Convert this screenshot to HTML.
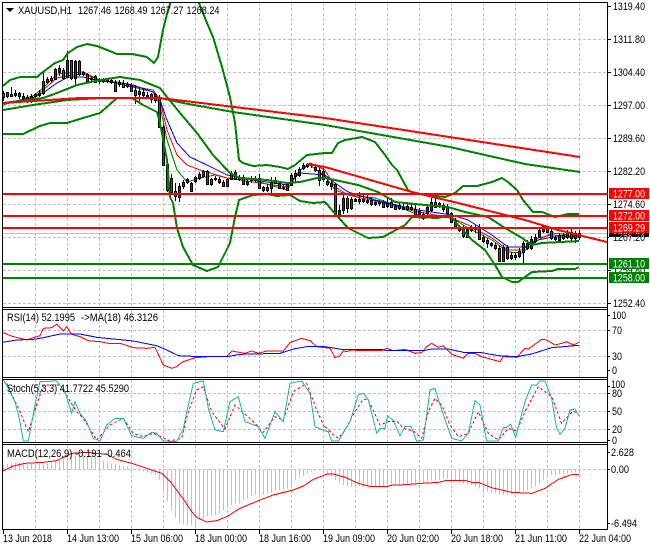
<!DOCTYPE html>
<html><head><meta charset="utf-8"><title>XAUUSD,H1</title>
<style>
html,body{margin:0;padding:0;background:#fff;width:650px;height:550px;overflow:hidden}
svg{display:block}
text{font-family:"Liberation Sans",sans-serif;font-size:11px;fill:#000}
.w{fill:#fff}
polyline,.c{fill:none;shape-rendering:crispEdges}
.g{stroke:#c0c0c0;stroke-width:1;stroke-dasharray:3 2;fill:none;shape-rendering:crispEdges}
</style></head><body>
<svg width="650" height="550" viewBox="0 0 650 550" xmlns="http://www.w3.org/2000/svg">
<rect width="650" height="550" fill="#fff"/>
<clipPath id="m"><rect x="3" y="3" width="604" height="304"/></clipPath>
<clipPath id="rs"><rect x="3" y="310" width="604" height="67"/></clipPath>
<clipPath id="st"><rect x="3" y="380" width="604" height="62"/></clipPath>
<clipPath id="ma"><rect x="3" y="445" width="604" height="84"/></clipPath>

<!-- grids -->
<path class="g" d="M35.5 3V307M67.5 3V307M99.5 3V307M131.5 3V307M163.5 3V307M195.5 3V307M227.5 3V307M259.5 3V307M291.5 3V307M323.5 3V307M355.5 3V307M387.5 3V307M419.5 3V307M451.5 3V307M483.5 3V307M515.5 3V307M547.5 3V307M579.5 3V307"/>
<path class="g" d="M3 39.5H607M3 72.5H607M3 105.5H607M3 138.5H607M3 171.5H607M3 204.5H607M3 237.5H607M3 270.5H607M3 303.5H607"/>
<path class="g" d="M35.5 310V377M67.5 310V377M99.5 310V377M131.5 310V377M163.5 310V377M195.5 310V377M227.5 310V377M259.5 310V377M291.5 310V377M323.5 310V377M355.5 310V377M387.5 310V377M419.5 310V377M451.5 310V377M483.5 310V377M515.5 310V377M547.5 310V377M579.5 310V377"/>
<path class="g" d="M3 330.5H607M3 356.5H607"/>
<path class="g" d="M35.5 380V442M67.5 380V442M99.5 380V442M131.5 380V442M163.5 380V442M195.5 380V442M227.5 380V442M259.5 380V442M291.5 380V442M323.5 380V442M355.5 380V442M387.5 380V442M419.5 380V442M451.5 380V442M483.5 380V442M515.5 380V442M547.5 380V442M579.5 380V442"/>
<path class="g" d="M3 393.5H607M3 411.5H607M3 429.5H607"/>
<path class="g" d="M35.5 445V529M67.5 445V529M99.5 445V529M131.5 445V529M163.5 445V529M195.5 445V529M227.5 445V529M259.5 445V529M291.5 445V529M323.5 445V529M355.5 445V529M387.5 445V529M419.5 445V529M451.5 445V529M483.5 445V529M515.5 445V529M547.5 445V529M579.5 445V529"/>
<path class="g" d="M3 469.5H607"/>

<!-- main chart -->
<g clip-path="url(#m)">
<path class="c" stroke="#c0c0c0" d="M3 233.5H607"/>
<!-- thin MAs -->
<polyline stroke="#008000" points="3,105 33,96 43,88 57,74 67,73 83,72 100,80 120,84 153,92 160,105 167,140 177,170 187,182 200,178 215,175 227,178 253,180 287,190 300,170 310,165 325,176 335,190 348,195 375,198 395,205 418,215 452,218 468,228 492,240 508,252 522,253 538,240 552,233 579,236"/>
<polyline stroke="#ff0000" points="3,103 33,98 43,90 57,78 67,76 83,74 100,80 120,84 153,90 160,100 167,130 177,155 187,165 200,170 227,178 253,182 287,187 300,170 310,163 325,170 335,187 348,195 375,201 418,212 452,218 468,225 492,238 508,250 522,250 538,238 552,235 579,237"/>
<polyline stroke="#0000ff" points="3,103 33,98 43,93 57,83 68,77 83,77 100,81 117,82 133,85 153,92 160,100 167,120 177,143 190,157 207,165 227,175 253,180 287,185 300,173 325,175 335,183 348,192 375,200 418,210 452,215 468,220 492,235 508,247 525,247 538,240 552,237 579,237"/>
<!-- wicks -->
<path class="c" stroke="#000" d="M3.5 91V101M7.5 92V98M11.5 87V96M15.5 90V97M19.5 92V99M23.5 93V100M27.5 95V103M31.5 94V103M35.5 93V98M39.5 90V97M43.5 72V95M47.5 77V84M51.5 76V83M55.5 68V80M59.5 65V76M63.5 68V79M67.5 51V78M71.5 60V80M75.5 60V85M79.5 60V76M83.5 71V76M87.5 73V82M91.5 76V82M95.5 75V83M99.5 78V84M103.5 78V83M107.5 78V83M111.5 78V84M115.5 80V92M119.5 80V87M123.5 80V88M127.5 82V88M131.5 83V92M135.5 85V104M139.5 87V103M143.5 88V98M147.5 92V99M151.5 93V103M155.5 93V103M159.5 95V128M163.5 125V166M167.5 160V192M171.5 174V195M175.5 183V201M179.5 183V202M183.5 180V189M187.5 178V184M191.5 182V192M195.5 176V183M199.5 172V180M203.5 170V177M207.5 170V185M211.5 178V186M215.5 176V181M219.5 177V184M223.5 180V187M227.5 178V187M231.5 171V180M235.5 170V180M239.5 175V181M243.5 175V185M247.5 178V186M251.5 176V183M255.5 176V182M259.5 174V189M263.5 186V192M267.5 184V192M271.5 177V195M275.5 177V184M279.5 181V189M283.5 185V190M287.5 182V191M291.5 173V186M295.5 170V182M299.5 167V177M303.5 163V170M307.5 163V168M311.5 163V168M315.5 164V172M319.5 168V186M323.5 168V182M327.5 178V186M331.5 180V190M335.5 183V217M339.5 205V220M343.5 193V214M347.5 196V213M351.5 197V210M355.5 198V202M359.5 192V204M363.5 193V203M367.5 195V204M371.5 197V206M375.5 200V206M379.5 200V206M383.5 200V208M387.5 198V208M391.5 198V208M395.5 204V210M399.5 202V210M403.5 203V210M407.5 202V211M411.5 204V211M415.5 205V216M419.5 208V216M423.5 212V220M427.5 204V216M431.5 198V212M435.5 198V208M439.5 202V208M443.5 203V212M447.5 204V215M451.5 212V223M455.5 218V229M459.5 225V232M463.5 225V238M467.5 228V238M471.5 225V232M475.5 225V233M479.5 224V240M483.5 235V243M487.5 238V248M491.5 242V247M495.5 243V250M499.5 246V262M503.5 245V262M507.5 245V260M511.5 252V260M515.5 253V260M519.5 248V258M523.5 241V263M527.5 240V250M531.5 236V250M535.5 234V243M539.5 228V238M543.5 225V233M547.5 226V233M551.5 228V240M555.5 235V241M559.5 233V241M563.5 233V240M567.5 230V239M571.5 228V241M575.5 231V243M579.5 230V240"/>
<!-- bear bodies -->
<path class="c" style="fill:#ff0000" stroke="#000" d="M2.5 93.5h2v4h-2zM6.5 92.5h2v4h-2zM18.5 93.5h2v3h-2zM26.5 97.5h2v3h-2zM34.5 94.5h2v2h-2zM62.5 70.5h2v8h-2zM70.5 60.5h2v18h-2zM78.5 61.5h2v13h-2zM86.5 74.5h2v7h-2zM94.5 76.5h2v6h-2zM114.5 82.5h2v9h-2zM122.5 83.5h2v4h-2zM130.5 85.5h2v6h-2zM134.5 90.5h2v5h-2zM150.5 94.5h2v5h-2zM158.5 97.5h2v30h-2zM162.5 127.5h2v38h-2zM166.5 164.5h2v26h-2zM170.5 178.5h2v14h-2zM174.5 191.5h2v5h-2zM206.5 171.5h2v13h-2zM222.5 182.5h2v4h-2zM234.5 172.5h2v7h-2zM242.5 177.5h2v7h-2zM258.5 178.5h2v10h-2zM318.5 170.5h2v10h-2zM322.5 171.5h2v8h-2zM326.5 181.5h2v3h-2zM334.5 184.5h2v31h-2zM346.5 198.5h2v10h-2zM382.5 202.5h2v5h-2zM390.5 202.5h2v5h-2zM414.5 209.5h2v6h-2zM434.5 202.5h2v5h-2zM446.5 207.5h2v6h-2zM454.5 220.5h2v7h-2zM462.5 227.5h2v9h-2zM478.5 227.5h2v12h-2zM486.5 240.5h2v3h-2zM498.5 248.5h2v13h-2zM506.5 247.5h2v11h-2zM546.5 227.5h2v5h-2zM550.5 231.5h2v7h-2zM570.5 232.5h2v6h-2z"/>
<!-- bull bodies -->
<path class="c" style="fill:#006400" stroke="#000" d="M10.5 94.5h2v2h-2zM14.5 93.5h2v2h-2zM22.5 96.5h2v2h-2zM30.5 96.5h2v3h-2zM38.5 93.5h2v2h-2zM42.5 81.5h2v12h-2zM46.5 79.5h2v3h-2zM50.5 78.5h2v2h-2zM54.5 69.5h2v10h-2zM58.5 68.5h2v4h-2zM66.5 60.5h2v17h-2zM74.5 61.5h2v17h-2zM82.5 72.5h2v2h-2zM90.5 78.5h2v1h-2zM98.5 79.5h2v2h-2zM102.5 79.5h2v2h-2zM106.5 79.5h2v2h-2zM110.5 80.5h2v2h-2zM118.5 82.5h2v2h-2zM126.5 84.5h2v2h-2zM138.5 91.5h2v3h-2zM142.5 92.5h2v3h-2zM146.5 95.5h2v2h-2zM154.5 94.5h2v6h-2zM178.5 186.5h2v11h-2zM182.5 182.5h2v4h-2zM186.5 179.5h2v3h-2zM190.5 183.5h2v8h-2zM194.5 177.5h2v4h-2zM198.5 174.5h2v4h-2zM202.5 171.5h2v5h-2zM210.5 179.5h2v5h-2zM214.5 178.5h2v1h-2zM218.5 179.5h2v3h-2zM226.5 179.5h2v7h-2zM230.5 173.5h2v6h-2zM238.5 177.5h2v2h-2zM246.5 181.5h2v3h-2zM250.5 178.5h2v2h-2zM254.5 178.5h2v1h-2zM262.5 187.5h2v3h-2zM266.5 187.5h2v3h-2zM270.5 182.5h2v6h-2zM274.5 180.5h2v3h-2zM278.5 183.5h2v5h-2zM282.5 187.5h2v1h-2zM286.5 184.5h2v6h-2zM290.5 175.5h2v10h-2zM294.5 173.5h2v3h-2zM298.5 169.5h2v6h-2zM302.5 165.5h2v3h-2zM306.5 164.5h2v2h-2zM310.5 164.5h2v1h-2zM314.5 167.5h2v3h-2zM330.5 183.5h2v3h-2zM338.5 210.5h2v6h-2zM342.5 198.5h2v12h-2zM350.5 199.5h2v9h-2zM354.5 199.5h2v2h-2zM358.5 199.5h2v2h-2zM362.5 199.5h2v2h-2zM366.5 200.5h2v2h-2zM370.5 200.5h2v4h-2zM374.5 202.5h2v2h-2zM378.5 202.5h2v1h-2zM386.5 203.5h2v3h-2zM394.5 206.5h2v3h-2zM398.5 205.5h2v3h-2zM402.5 207.5h2v2h-2zM406.5 206.5h2v3h-2zM410.5 207.5h2v2h-2zM418.5 211.5h2v4h-2zM422.5 214.5h2v4h-2zM426.5 207.5h2v6h-2zM430.5 202.5h2v8h-2zM438.5 203.5h2v3h-2zM442.5 205.5h2v4h-2zM450.5 213.5h2v9h-2zM458.5 227.5h2v3h-2zM466.5 229.5h2v8h-2zM470.5 227.5h2v3h-2zM474.5 227.5h2v2h-2zM482.5 237.5h2v4h-2zM490.5 243.5h2v2h-2zM494.5 245.5h2v3h-2zM502.5 247.5h2v14h-2zM510.5 255.5h2v3h-2zM514.5 255.5h2v2h-2zM518.5 251.5h2v5h-2zM522.5 243.5h2v9h-2zM526.5 243.5h2v5h-2zM530.5 239.5h2v9h-2zM534.5 237.5h2v4h-2zM538.5 230.5h2v7h-2zM542.5 226.5h2v5h-2zM554.5 237.5h2v2h-2zM558.5 235.5h2v5h-2zM562.5 235.5h2v3h-2zM566.5 232.5h2v5h-2zM574.5 233.5h2v5h-2zM578.5 233.5h2v4h-2z"/>
<!-- bollinger -->
<polyline stroke="#008000" stroke-width="2" points="3,86 10,80 20,77 37,77 43,72 55,63 63,60 68,53 77,47 87,44 97,46 107,50 117,54 132,54 147,57 154,63 158,57 163,30 168,10 172,-2 197,-2 207,23 213,37 222,67 230,97 235,123 239,160 243,163 253,166 267,165 280,167 288,169 295,165 307,155 325,153 332,153 338,143 345,140 362,137 375,142 385,155 392,165 397,170 408,190 413,193 445,197 455,193 463,186 477,186 492,182 502,178 508,182 517,190 523,200 533,212 542,212 555,217 568,214 579,214"/>
<polyline stroke="#008000" stroke-width="2" points="3,103 43,98 57,93 77,85 100,80 120,77 140,80 160,88 167,97 180,113 197,133 213,155 230,173 240,178 267,180 287,183 300,182 317,178 325,178 335,180 358,185 378,192 395,202 425,205 448,207 465,212 488,217 505,228 522,238 532,245 542,243 579,241"/>
<polyline stroke="#008000" stroke-width="2" points="3,134 23,134 40,126 50,123 67,123 83,118 100,113 117,98 132,98 143,105 157,112 160,123 167,160 170,197 173,203 177,228 183,247 193,265 207,271 218,267 230,243 235,217 239,200 253,195 267,194 277,196 290,195 300,201 313,203 325,202 338,217 348,228 368,238 383,237 405,225 412,217 438,218 450,215 458,225 472,240 485,250 495,265 502,277 512,282 518,282 532,272 552,271 558,269 575,269 579,267"/>
<!-- trend lines -->
<polyline stroke="#008000" stroke-width="2" points="3,110 33,105 67,100 100,98 160,98 183,103 233,112 325,125 450,147 485,155 525,164 580,172"/>
<polyline stroke="#ff0000" stroke-width="2" points="3,103 33,101 80,98 160,98 325,118 580,157"/>
<polyline stroke="#ff0000" stroke-width="2" points="307,164 325,167 412,192 458,203 525,220 558,230 607,242"/>
<!-- horizontals -->
<path class="c" stroke="#ff0000" stroke-width="2" d="M3 194H607M3 216H607M3 228H607"/>
<path class="c" stroke="#008000" stroke-width="2" d="M3 264H607M3 278H607"/>
</g>

<!-- RSI -->
<g clip-path="url(#rs)">
<g transform="translate(0 305) scale(.33333)">
<polyline stroke="#ff0000" stroke-width="3" points="8,82 30,92 60,100 80,105 100,98 120,92 130,70 155,68 170,58 190,78 200,65 215,88 240,95 265,107 300,110 325,115 360,115 385,123 400,128 440,130 465,127 490,180 515,190 530,185 545,172 585,158 625,155 680,155 695,138 735,145 755,138 775,145 800,138 850,138 870,113 905,100 930,107 950,125 975,128"/>
<polyline stroke="#0000ff" stroke-width="3" points="8,112 50,105 100,103 130,98 180,87 240,87 290,97 400,108 470,122 500,135 535,152 600,155 680,155 720,148 840,145 880,132 920,125 975,125"/>
</g>
<g transform="translate(325 305) scale(.33333)">
<polyline stroke="#ff0000" stroke-width="3" points="0,128 15,130 30,158 45,152 55,137 65,140 80,135 110,137 140,137 170,137 185,130 205,137 240,133 270,145 290,143 305,125 320,115 340,127 355,122 380,148 415,160 430,145 450,145 470,155 525,170 535,155 575,157 600,130 610,132 650,103 665,105 690,120 710,115 725,110 745,120 762,112"/>
<polyline stroke="#0000ff" stroke-width="3" points="0,125 50,133 170,133 180,136 300,136 320,132 370,132 420,143 470,143 520,152 575,155 620,147 680,128 762,121"/>
</g></g>

<!-- Stoch -->
<g clip-path="url(#st)">
<g transform="translate(0 305) scale(.33333)">
<polyline stroke="#ff0000" stroke-width="3" stroke-dasharray="8 7" points="20,235 60,320 85,380 110,300 130,240 180,240 230,320 250,340 290,405 330,360 370,340 400,385 430,395 460,385 510,408 545,400 565,320 590,255 610,245 635,320 675,372 705,300 760,350 790,382 825,335 850,345 880,260 920,235 950,315 975,370"/>
<polyline stroke="#20b2aa" stroke-width="3" points="8,222 20,240 45,290 60,350 70,408 85,408 105,300 120,230 170,228 195,260 215,325 225,290 240,325 260,350 280,400 300,408 320,360 345,340 370,340 395,392 430,400 455,382 470,385 490,408 530,410 550,370 565,300 580,235 610,228 625,310 645,375 670,380 690,290 715,275 735,350 775,365 795,400 825,320 850,350 870,235 905,228 930,265 945,365 975,378"/>
</g>
<g transform="translate(325 305) scale(.33333)">
<polyline stroke="#ff0000" stroke-width="3" stroke-dasharray="8 7" points="0,365 20,385 40,400 60,375 90,320 115,282 130,285 165,360 190,350 215,348 235,370 265,378 290,400 310,320 330,280 350,300 375,360 400,395 430,385 460,320 490,385 520,405 550,370 575,378 600,320 640,245 680,275 710,355 740,322 762,320"/>
<polyline stroke="#20b2aa" stroke-width="3" points="0,378 10,380 20,408 40,408 75,350 100,270 115,265 130,285 155,385 165,370 180,370 188,332 205,347 225,392 240,365 258,365 275,408 295,405 315,255 330,250 350,315 380,400 410,408 430,385 450,287 465,300 485,408 520,408 535,367 545,367 557,357 572,397 600,290 620,240 635,240 645,228 660,228 680,280 695,370 705,388 720,370 735,315 750,312 762,333"/>
</g></g>

<!-- MACD -->
<g clip-path="url(#ma)">
<g transform="translate(0 440) scale(.33333)">
<path class="c" stroke="#c0c0c0" stroke-width="3" d="M10.5 88V75M22.5 88V72M34.5 88V70M46.5 88V68M58.5 88V67M70.5 88V68M82.5 88V72M94.5 88V72M106.5 88V72M118.5 88V72M130.5 88V73M142.5 88V70M154.5 88V68M166.5 88V65M178.5 88V60M190.5 88V55M202.5 88V50M214.5 88V48M226.5 88V46M238.5 88V46M250.5 88V45M262.5 88V47M274.5 88V48M286.5 88V50M298.5 88V55M310.5 88V62M322.5 88V65M334.5 88V70M346.5 88V72M358.5 88V75M370.5 88V78M382.5 88V80M394.5 88V85M406.5 88V85M418.5 88V92M430.5 88V95M442.5 88V97M454.5 88V100M466.5 88V105M478.5 88V120M490.5 88V150M502.5 88V183M514.5 88V212M526.5 88V232M538.5 88V250M550.5 88V253M562.5 88V255M574.5 88V255M586.5 88V258M598.5 88V238M610.5 88V235M622.5 88V230M634.5 88V228M646.5 88V225M658.5 88V220M670.5 88V210M682.5 88V200M694.5 88V195M706.5 88V190M718.5 88V190M730.5 88V182M742.5 88V175M754.5 88V168M766.5 88V165M778.5 88V165M790.5 88V165M802.5 88V160M814.5 88V158M826.5 88V150M838.5 88V150M850.5 88V148M862.5 88V145M874.5 88V135M886.5 88V122M898.5 88V112M910.5 88V108M922.5 88V100M934.5 88V95M946.5 88V92M958.5 88V90M970.5 88V95"/>
<polyline stroke="#ff0000" stroke-width="3" points="8,93 40,78 75,70 130,67 170,62 215,40 260,37 320,43 350,58 395,70 440,85 485,100 515,130 545,170 575,215 590,232 620,246 650,242 680,230 720,205 780,180 820,165 880,150 910,138 940,118 975,105"/>
</g>
<g transform="translate(325 440) scale(.33333)">
<path class="c" stroke="#c0c0c0" stroke-width="3" d="M7.5 88V103M19.5 88V108M31.5 88V120M43.5 88V128M55.5 88V135M67.5 88V138M79.5 88V140M91.5 88V142M103.5 88V140M115.5 88V140M127.5 88V140M139.5 88V140M151.5 88V140M163.5 88V140M175.5 88V140M187.5 88V137M199.5 88V135M211.5 88V135M223.5 88V135M235.5 88V133M247.5 88V132M259.5 88V130M271.5 88V130M283.5 88V130M295.5 88V130M307.5 88V125M319.5 88V122M331.5 88V122M343.5 88V120M355.5 88V115M367.5 88V117M379.5 88V120M391.5 88V123M403.5 88V127M415.5 88V132M427.5 88V135M439.5 88V135M451.5 88V140M463.5 88V145M475.5 88V150M487.5 88V155M499.5 88V158M511.5 88V160M523.5 88V163M535.5 88V165M547.5 88V163M559.5 88V160M571.5 88V158M583.5 88V155M595.5 88V155M607.5 88V150M619.5 88V145M631.5 88V140M643.5 88V130M655.5 88V120M667.5 88V112M679.5 88V105M691.5 88V105M703.5 88V102M715.5 88V102M727.5 88V100M739.5 88V98M751.5 88V97M763.5 88V98"/>
<polyline stroke="#ff0000" stroke-width="3" points="0,103 25,102 60,112 100,130 135,139 190,139 195,136 240,134 290,130 340,127 365,121 420,121 440,127 460,127 500,143 560,157 620,160 660,145 700,118 740,104 762,103"/>
</g></g>

<!-- frame -->
<path class="c" stroke="#000" d="M2.5 2.5H607.5V529.5H2.5ZM2.5 307.5H607.5M2.5 309.5H607.5M2.5 377.5H607.5M2.5 379.5H607.5M2.5 442.5H607.5M2.5 444.5H607.5"/>
<!-- ticks -->
<path class="c" stroke="#000" d="M607 6.5h4M607 39.5h4M607 72.5h4M607 105.5h4M607 138.5h4M607 171.5h4M607 204.5h4M607 237.5h4M607 270.5h4M607 303.5h4M607 315.5h3M607 330.5h3M607 356.5h3M607 370.5h3M607 386.5h3M607 393.5h3M607 411.5h3M607 429.5h3M607 440.5h3M607 452.5h3M607 469.5h3M607 523.5h3M3.5 529v5M67.5 529v5M131.5 529v5M195.5 529v5M259.5 529v5M323.5 529v5M387.5 529v5M451.5 529v5M515.5 529v5M579.5 529v5"/>

<!-- caption -->
<path d="M6 8h8l-4 4z" fill="#000"/>
<text x="18" y="14" textLength="54" lengthAdjust="spacingAndGlyphs">XAUUSD,H1</text>
<text x="78" y="14" textLength="33" lengthAdjust="spacingAndGlyphs">1267.46</text>
<text x="114.5" y="14" textLength="33" lengthAdjust="spacingAndGlyphs">1268.49</text>
<text x="150.5" y="14" textLength="33" lengthAdjust="spacingAndGlyphs">1267.27</text>
<text x="186.5" y="14" textLength="33" lengthAdjust="spacingAndGlyphs">1268.24</text>
<text x="7" y="321" textLength="68" lengthAdjust="spacingAndGlyphs">RSI(14) 52.1995</text>
<text x="81" y="321" textLength="77" lengthAdjust="spacingAndGlyphs">-&gt;MA(18) 46.3126</text>
<text x="7" y="392" textLength="122" lengthAdjust="spacingAndGlyphs">Stoch(5,3,3) 41.7722 45.5290</text>
<text x="7" y="457" textLength="124" lengthAdjust="spacingAndGlyphs">MACD(12,26,9) -0.191 -0.464</text>

<!-- price axis -->
<g>
<text x="613" y="10" textLength="32" lengthAdjust="spacingAndGlyphs">1319.40</text>
<text x="613" y="43" textLength="32" lengthAdjust="spacingAndGlyphs">1311.80</text>
<text x="613" y="76" textLength="32" lengthAdjust="spacingAndGlyphs">1304.40</text>
<text x="613" y="109" textLength="32" lengthAdjust="spacingAndGlyphs">1297.00</text>
<text x="613" y="142" textLength="32" lengthAdjust="spacingAndGlyphs">1289.60</text>
<text x="613" y="175" textLength="32" lengthAdjust="spacingAndGlyphs">1282.20</text>
<text x="613" y="208" textLength="32" lengthAdjust="spacingAndGlyphs">1274.60</text>
<text x="613" y="274" textLength="32" lengthAdjust="spacingAndGlyphs">1259.80</text>
<text x="613" y="307" textLength="32" lengthAdjust="spacingAndGlyphs">1252.40</text>
<rect x="609" y="232" width="40" height="9" fill="#000"/>
<text class="w" x="613" y="240" textLength="32" lengthAdjust="spacingAndGlyphs">1268.24</text>
<rect x="609" y="237" width="40" height="5" fill="#fff"/>
<text x="613" y="241" textLength="32" lengthAdjust="spacingAndGlyphs">1267.20</text>
<rect x="609" y="188" width="40" height="11" fill="#ff0000"/>
<text class="w" x="613" y="197.5" textLength="32" lengthAdjust="spacingAndGlyphs">1277.00</text>
<rect x="609" y="210" width="40" height="11" fill="#ff0000"/>
<text class="w" x="613" y="219.5" textLength="32" lengthAdjust="spacingAndGlyphs">1272.00</text>
<rect x="609" y="222" width="40" height="11" fill="#ff0000"/>
<text class="w" x="613" y="231.5" textLength="32" lengthAdjust="spacingAndGlyphs">1269.29</text>
<rect x="609" y="258" width="40" height="11" fill="#008000"/>
<text class="w" x="613" y="267.5" textLength="32" lengthAdjust="spacingAndGlyphs">1261.10</text>
<rect x="609" y="272" width="40" height="11" fill="#008000"/>
<text class="w" x="613" y="281.5" textLength="32" lengthAdjust="spacingAndGlyphs">1258.00</text>

<text x="612" y="319" textLength="14" lengthAdjust="spacingAndGlyphs">100</text>
<text x="612" y="334" textLength="10" lengthAdjust="spacingAndGlyphs">70</text>
<text x="612" y="360" textLength="10" lengthAdjust="spacingAndGlyphs">30</text>
<text x="612" y="374" textLength="5" lengthAdjust="spacingAndGlyphs">0</text>
<text x="611" y="388" textLength="14" lengthAdjust="spacingAndGlyphs">100</text>
<text x="612" y="397" textLength="10" lengthAdjust="spacingAndGlyphs">80</text>
<text x="612" y="415" textLength="10" lengthAdjust="spacingAndGlyphs">50</text>
<text x="612" y="433" textLength="10" lengthAdjust="spacingAndGlyphs">20</text>
<text x="612" y="444" textLength="5" lengthAdjust="spacingAndGlyphs">0</text>
<text x="611" y="456" textLength="23" lengthAdjust="spacingAndGlyphs">2.628</text>
<text x="611" y="473" textLength="18" lengthAdjust="spacingAndGlyphs">0.00</text>
<text x="611" y="527" textLength="26" lengthAdjust="spacingAndGlyphs">-6.494</text>
</g>

<!-- time axis -->
<g>
<text x="3" y="542" textLength="49" lengthAdjust="spacingAndGlyphs">13 Jun 2018</text>
<text x="67" y="542" textLength="52" lengthAdjust="spacingAndGlyphs">14 Jun 13:00</text>
<text x="131" y="542" textLength="52" lengthAdjust="spacingAndGlyphs">15 Jun 06:00</text>
<text x="195" y="542" textLength="52" lengthAdjust="spacingAndGlyphs">18 Jun 00:00</text>
<text x="259" y="542" textLength="52" lengthAdjust="spacingAndGlyphs">18 Jun 16:00</text>
<text x="323" y="542" textLength="52" lengthAdjust="spacingAndGlyphs">19 Jun 09:00</text>
<text x="387" y="542" textLength="52" lengthAdjust="spacingAndGlyphs">20 Jun 02:00</text>
<text x="451" y="542" textLength="52" lengthAdjust="spacingAndGlyphs">20 Jun 18:00</text>
<text x="515" y="542" textLength="52" lengthAdjust="spacingAndGlyphs">21 Jun 11:00</text>
<text x="579" y="542" textLength="52" lengthAdjust="spacingAndGlyphs">22 Jun 04:00</text>
</g>
</svg>
</body></html>
